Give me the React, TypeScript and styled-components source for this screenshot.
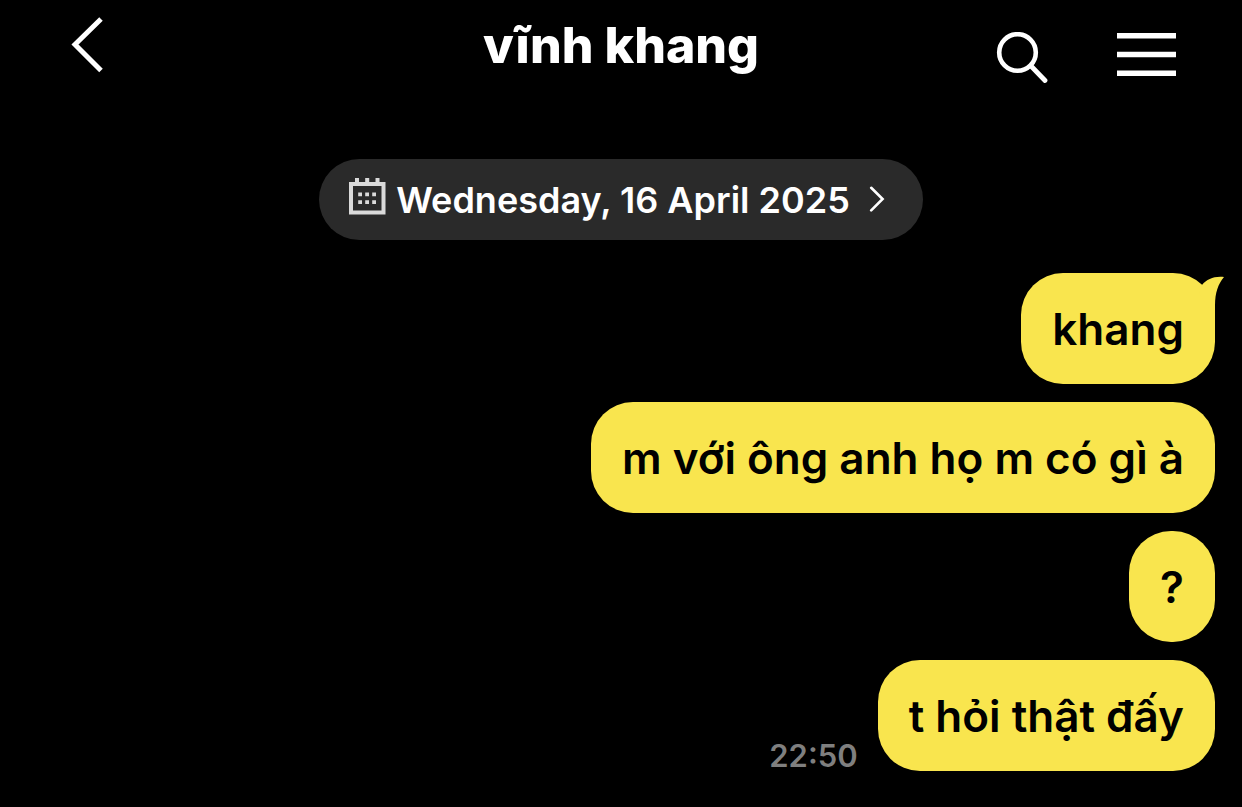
import React from "react";
import styled, { createGlobalStyle } from "styled-components";

const GlobalStyle = createGlobalStyle`
  *, *::before, *::after { box-sizing: border-box; }
  body {
    margin: 0;
    background: #000;
    color: #fff;
    font-family: Inter, "Noto Sans", sans-serif;
  }
  button {
    margin: 0;
    padding: 0;
    border: 0;
    background: none;
    color: inherit;
    font: inherit;
    cursor: pointer;
  }
  svg { display: block; }
`;

const Screen = styled.div`
  display: flex;
  flex-direction: column;
  min-height: 100vh;
`;

const Header = styled.header`
  display: grid;
  grid-template-columns: 1fr auto 1fr;
  align-items: start;
  padding: 16px 66px 0;
`;

const Title = styled.h1`
  margin: 0;
  font-size: 50px;
  font-weight: 800;
  line-height: 58px;
`;

const Actions = styled.div`
  display: flex;
  justify-content: flex-end;
  align-items: flex-start;
  gap: 69px;
  padding-top: 16px;
`;

const IconButton = styled.button`
  display: flex;
  justify-self: start;
`;

const Main = styled.main`
  display: flex;
  flex-direction: column;
  padding: 75px 27px 36px;
`;

const DatePill = styled.button`
  display: flex;
  align-items: center;
  align-self: center;
  padding: 18px 38px 18px 30px;
  border-radius: 41px;
  background: #2a2a2a;
`;

const DateText = styled.span`
  padding: 2px 19px 0 10px;
  font-size: 36px;
  font-weight: 600;
  line-height: 43px;
`;

const Messages = styled.ul`
  display: flex;
  flex-direction: column;
  gap: 18px;
  margin: 33px 0 0;
  padding: 0;
  list-style: none;
`;

const Row = styled.li`
  display: flex;
  justify-content: flex-end;
  align-items: flex-end;
  gap: 20px;
`;

const Bubble = styled.div`
  position: relative;
  padding: 29px 31px 27px;
  border-radius: 42px;
  background: #f9e54e;
  color: #000;
  font-size: 44px;
  font-weight: 600;
  line-height: 55px;
`;

const Tail = styled.svg`
  position: absolute;
  top: 0;
  right: -10px;
`;

const Time = styled.time`
  color: #7f7f7f;
  font-size: 31px;
  font-weight: 600;
  line-height: 31px;
`;

const BackIcon = () => (
  <svg width="38" height="57" viewBox="-5 0 38 57" fill="none" stroke="currentColor" strokeWidth="5" aria-hidden="true">
    <path d="M30 3 L4 28.5 L30 54.5" />
  </svg>
);

const SearchIcon = () => (
  <svg width="52" height="52" viewBox="0 0 52 52" fill="none" stroke="currentColor" strokeLinecap="round" aria-hidden="true">
    <circle cx="21.5" cy="20.5" r="18.3" strokeWidth="4.6" />
    <path d="M35 34 L49 48.5" strokeWidth="4.8" />
  </svg>
);

const MenuIcon = () => (
  <svg width="59" height="44" viewBox="0 0 59 44" fill="none" stroke="currentColor" strokeWidth="5.4" aria-hidden="true">
    <path d="M0 3.8H59M0 22.5H59M0 41.3H59" />
  </svg>
);

const CalendarIcon = () => (
  <svg width="37" height="44" viewBox="0 0 37 44" fill="#dadada" aria-hidden="true">
    <path fillRule="evenodd" d="M0 4H36.5V36.5H0ZM4 8V32.5H32.5V8Z" />
    <path d="M6 0H10V5H6ZM16.2 0H20.2V5H16.2ZM26.5 0H30.5V5H26.5Z" />
    <path d="M9.2 14.5h3.8v3.8h-3.8zM16.2 14.5h3.8v3.8h-3.8zM23.2 14.5h3.8v3.8h-3.8zM9.2 22.2h3.8v3.8h-3.8zM16.2 22.2h3.8v3.8h-3.8zM23.2 22.2h3.8v3.8h-3.8z" />
  </svg>
);

const ChevronIcon = () => (
  <svg width="16" height="28" viewBox="0 0 16 28" fill="none" stroke="currentColor" strokeWidth="2.6" strokeLinecap="round" aria-hidden="true">
    <path d="M2.2 1.8 L13.6 13 L2.2 24.4" />
  </svg>
);

const BubbleTail = () => (
  <Tail width="40" height="44" viewBox="0 0 40 44" fill="#f9e54e" aria-hidden="true">
    <path d="M17 12 C22 6 29 3 39 4 C33 11 30 20 30 32 V44 L14 20 Z" />
  </Tail>
);

const messages = [
  { text: "khang", tail: true },
  { text: "m với ông anh họ m có gì à" },
  { text: "?" },
  { text: "t hỏi thật đấy", time: "22:50" },
];

export default function App() {
  return (
    <Screen>
      <GlobalStyle />
      <Header>
        <IconButton type="button" aria-label="Back">
          <BackIcon />
        </IconButton>
        <Title>vĩnh khang</Title>
        <Actions>
          <IconButton type="button" aria-label="Search">
            <SearchIcon />
          </IconButton>
          <IconButton type="button" aria-label="Menu">
            <MenuIcon />
          </IconButton>
        </Actions>
      </Header>
      <Main>
        <DatePill type="button">
          <CalendarIcon />
          <DateText>Wednesday, 16 April 2025</DateText>
          <ChevronIcon />
        </DatePill>
        <Messages>
          {messages.map((message) => (
            <Row key={message.text}>
              {message.time && <Time>{message.time}</Time>}
              <Bubble>
                {message.text}
                {message.tail && <BubbleTail />}
              </Bubble>
            </Row>
          ))}
        </Messages>
      </Main>
    </Screen>
  );
}
